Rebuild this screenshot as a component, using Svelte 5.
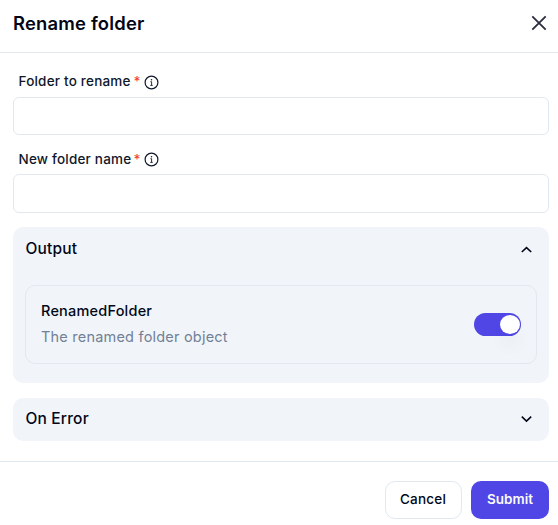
<script>
  let folder = $state('');
  let newName = $state('');
  let outputOpen = $state(true);
  let errorOpen = $state(false);
  let enabled = $state(true);
</script>

{#snippet info()}
  <svg class="info" width="15" height="15" viewBox="0 0 15 15" fill="none" stroke="#0f172a">
    <circle cx="7.5" cy="7.5" r="6.4" stroke-width="1.2" />
    <path d="M6.4 6.7H7.6V10.2M6.3 10.4H8.7" stroke-width="0.9" />
    <circle cx="7.5" cy="4.7" r=".75" fill="#0f172a" stroke="none" />
  </svg>
{/snippet}

{#snippet chevron(open)}
  <svg width="12" height="8" viewBox="0 0 12 8" fill="none" stroke="#020617" stroke-width="1.6">
    <path d={open ? 'M1.8 6L6.5 1.6L11.2 6' : 'M1.8 1.7L6.5 6.1L11.2 1.7'} />
  </svg>
{/snippet}

<div class="dialog">
  <header>
    <h1>Rename folder</h1>
    <button class="close" aria-label="Close">
      <svg width="16" height="16" viewBox="0 0 16 16" fill="none" stroke="#2b2d3f" stroke-width="1.8">
        <path d="M1.3 1.3L14.7 14.7M14.7 1.3L1.3 14.7" />
      </svg>
    </button>
  </header>

  <main>
    <label for="folder"><span class="caption">Folder to rename</span><span class="star">*</span>{@render info()}</label>
    <input id="folder" bind:value={folder} />
    <label for="name" class="second"><span class="caption">New folder name</span><span class="star">*</span>{@render info()}</label>
    <input id="name" class="tall" bind:value={newName} />

    <section class="output">
      <button class="toggle-row" onclick={() => (outputOpen = !outputOpen)}>
        <span>Output</span>{@render chevron(outputOpen)}
      </button>
      {#if outputOpen}
        <div class="card">
          <div class="about">
            <div class="name">RenamedFolder</div>
            <div class="desc">The renamed folder object</div>
          </div>
          <button class="switch" class:on={enabled} role="switch" aria-checked={enabled} aria-label="RenamedFolder" onclick={() => (enabled = !enabled)}>
            <span class="thumb"></span>
          </button>
        </div>
      {/if}
    </section>

    <section class="error">
      <button class="toggle-row" onclick={() => (errorOpen = !errorOpen)}>
        <span>On Error</span>{@render chevron(errorOpen)}
      </button>
    </section>
  </main>

  <footer>
    <button class="cancel">Cancel</button>
    <button class="submit">Submit</button>
  </footer>
</div>

<style>
  :global(body) { margin: 0; background: #fff; }
  .dialog, .dialog * { box-sizing: border-box; }
  .dialog {
    width: 558px;
    height: 525px;
    overflow: hidden;
    font-family: Inter, sans-serif;
    color: #020617;
    background: #fff;
  }
  button { font: inherit; color: inherit; border: 0; background: none; padding: 0; cursor: pointer; }
  svg { display: block; flex: none; }
  header {
    height: 53px;
    padding: 0 11px 6px 13px;
    border-bottom: 1px solid #e2e8f0;
    display: flex;
    align-items: center;
    justify-content: space-between;
  }
  h1 { margin: 0; font-size: 18.4px; line-height: 24px; font-weight: 600; letter-spacing: 0.2px; }
  main { padding: 19px 9px 0 13px; }
  label {
    height: 18px;
    margin-bottom: 7px;
    padding-left: 5.5px;
    display: flex;
    align-items: center;
    font-size: 13.5px;
    line-height: 18px;
    font-weight: 500;
    color: #0f172a;
  }
  label.second { margin-top: 15px; margin-bottom: 6px; }
  .caption { width: 115px; letter-spacing: 0.2px; white-space: nowrap; }
  .star { color: #ef4444; width: 7px; }
  .info { margin: 2px 0 0 3.5px; }
  .second .info { margin-top: 0; }
  input {
    display: block;
    width: 100%;
    height: 38px;
    padding: 0 12px;
    border: 1px solid #e2e8f0;
    border-radius: 6px;
    background: #fff;
    font: 14px Inter, sans-serif;
    outline: none;
  }
  input.tall { height: 39px; }
  section { background: #f1f5f9; border-radius: 10px; }
  .output { height: 156px; margin-top: 14px; padding: 0 12px; }
  .error { height: 43px; margin-top: 15px; padding: 0 12px; }
  .toggle-row {
    width: 100%;
    height: 43px;
    padding: 0 5px 0 0.5px;
    display: flex;
    align-items: center;
    justify-content: space-between;
    font-size: 15.5px;
    font-weight: 500;
    letter-spacing: 0.17px;
  }
  .output svg { margin-top: 2px; }
  .error .toggle-row { height: 41px; }
  .error svg { margin-top: 1px; }
  .card {
    height: 79px;
    margin-top: 15px;
    padding: 0 15px;
    border: 1px solid #e2e8f0;
    border-radius: 10px;
    display: flex;
    align-items: center;
    justify-content: space-between;
  }
  .about { padding-bottom: 2px; }
  .name { font-size: 14.5px; line-height: 26px; font-weight: 500; letter-spacing: 0.2px; }
  .desc { font-size: 14.5px; line-height: 26px; color: #718096; letter-spacing: 0.21px; }
  .switch {
    width: 47px;
    height: 23px;
    padding: 2px 1px;
    border-radius: 12px;
    background: #cbd5e1;
    display: flex;
  }
  .switch.on { background: #4f46e5; justify-content: flex-end; }
  .thumb {
    width: 20px;
    height: 19px;
    border-radius: 50%;
    background: #fff;
    box-shadow: 0 14px 16px -1px rgba(0, 0, 0, 0.04);
  }
  footer {
    margin-top: 20px;
    padding: 19px 9px 0 0;
    border-top: 1px solid #e2e8f0;
    display: flex;
    justify-content: flex-end;
    gap: 9px;
  }
  footer button { height: 38px; border-radius: 10px; font-size: 13.5px; font-weight: 500; padding-bottom: 2px; }
  .cancel { width: 77px; border: 1px solid #e2e8f0; letter-spacing: 0.2px; padding-right: 1px; }
  .submit { width: 78px; background: #4f46e5; color: #f8fafc; font-weight: 600; }
</style>
